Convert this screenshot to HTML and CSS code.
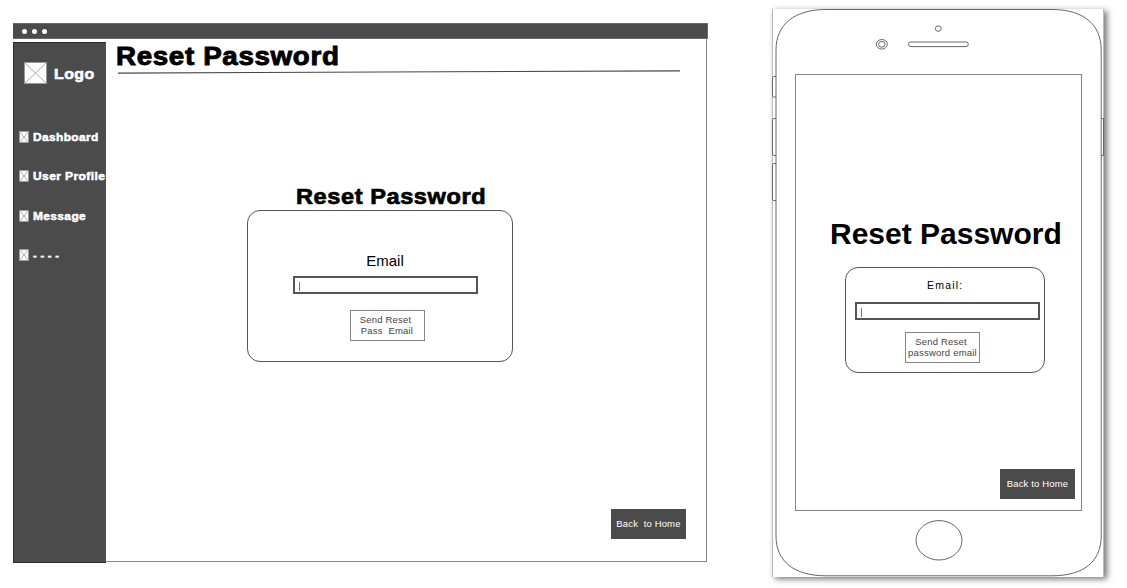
FILE: index.html
```html
<!DOCTYPE html>
<html lang="en">
<head>
<meta charset="utf-8">
<title>Reset Password</title>
<link rel="stylesheet" href="styles.css">
</head>
<body>
<svg class="defs" width="0" height="0" aria-hidden="true">
  <symbol id="placeholder" viewBox="0 0 24 24" preserveAspectRatio="none">
    <rect x="0" y="0" width="24" height="24" fill="#fff"/>
    <path d="M0 0L24 24M24 0L0 24" stroke="#aaa" stroke-width="1" vector-effect="non-scaling-stroke"/>
    <rect x="0" y="0" width="24" height="24" fill="none" stroke="#999" stroke-width="2" vector-effect="non-scaling-stroke"/>
  </symbol>
</svg>
<main class="board">
  <section class="browser">
    <header class="titlebar"><i class="dot"></i><i class="dot"></i><i class="dot"></i></header>
    <div class="window">
      <nav class="sidebar">
        <div class="brand"><svg class="brand-icon"><use href="#placeholder"/></svg><span class="brand-name">Logo</span></div>
        <div class="nav-item"><svg class="nav-icon"><use href="#placeholder"/></svg><span class="nav-label">Dashboard</span></div>
        <div class="nav-item"><svg class="nav-icon"><use href="#placeholder"/></svg><span class="nav-label profile">User Profile</span></div>
        <div class="nav-item"><svg class="nav-icon"><use href="#placeholder"/></svg><span class="nav-label">Message</span></div>
        <div class="nav-item"><svg class="nav-icon"><use href="#placeholder"/></svg><span class="nav-label more">- - - -</span></div>
      </nav>
      <div class="page">
        <h1 class="page-title">Reset Password</h1>
        <svg class="rule" width="563" height="5" viewBox="0 0 563 5"><path d="M0 4.100L562 1.900" stroke="#484448" stroke-width="1.1"/></svg>
        <h2 class="form-title">Reset Password</h2>
        <form class="card">
          <label class="label">Email</label>
          <div class="field"><i class="caret"></i></div>
          <div class="button"><span class="line-one">Send Reset</span><span class="line-two">Pass&nbsp; Email</span></div>
        </form>
        <div class="home-button">Back&nbsp; to Home</div>
      </div>
    </div>
  </section>
  <section class="phone">
    <svg class="phone-art" width="332" height="568" viewBox="772 9 332 568" fill="none" stroke="#666" stroke-width="1">
      <path d="M776 50C776 24 795 9.5 826 9.5H1052C1083 9.5 1101.2 24 1101.2 50V536C1101.2 562 1083 575.8 1052 575.8H826C795 575.8 776 562 776 536Z"/>
      <path d="M776 76.5h-2.5q-1 0-1 1v18q0 1.500 1 1.500H776M776 118.500h-2.500q-1 0-1 1v34.500q0 1.500 1 1.500H776M776 163.500h-2.500q-1 0-1 1v34.500q0 1.500 1 1.500H776M1101 118.500h2.500v37H1101"/>
      <ellipse cx="881.800" cy="44.300" rx="5.500" ry="4.800"/>
      <ellipse cx="881.800" cy="44.300" rx="3.200" ry="2.900"/>
      <ellipse cx="938.300" cy="28.600" rx="3" ry="2.700"/>
      <rect x="908.500" y="42" width="59.800" height="4.600" rx="2.300"/>
      <ellipse cx="939" cy="540.300" rx="23" ry="19.700"/>
    </svg>
    <div class="screen">
      <h1 class="screen-title">Reset Password</h1>
      <form class="card small">
        <label class="label">Email:</label>
        <div class="field"><i class="caret"></i></div>
        <div class="button"><span class="line-one">Send Reset</span><span class="line-two">password email</span></div>
      </form>
      <div class="home-button">Back&nbsp;to Home</div>
    </div>
  </section>
</main>
</body>
</html>
```
FILE: styles.css
```css
* { box-sizing: border-box; }
body { margin: 0; background: #fff; color: #000; font-family: "Liberation Sans", Arial, sans-serif; overflow: hidden; }
h1, h2, form { margin: 0; }
.defs { position: absolute; }
.board { display: flex; align-items: flex-start; width: 1127px; height: 588px; padding: 9px 0 0 13px; }

.browser { width: 695px; margin-top: 14px; flex: none; }
.titlebar { display: flex; align-items: center; gap: 5px; height: 16px; padding: 1px 0 0 9px; background: #4b4b4b; border: solid #6b6b6b; border-width: 1px 1px 1px 0; }
.dot { width: 5px; height: 5px; border-radius: 50%; background: #fff; }
.window { display: flex; width: 694px; height: 523px; border: 1px solid #888; border-width: 0 1px 1px 0; }
.sidebar { width: 93px; height: 521px; margin-top: 3px; flex: none; background: #4b4b4b; border: 1px solid #2e2e2e; border-right-color: #555; color: #fff; font-weight: bold; }
.brand { display: flex; align-items: center; gap: 7px; height: 22px; margin: 19px 0 0 10px; }
.brand-icon { width: 23px; height: 22px; flex: none; }
.brand-name { font-size: 15px; line-height: 22px; padding-top: 1px; letter-spacing: .4px; transform: scaleX(1.06); transform-origin: left; -webkit-text-stroke: .6px #fff; }
.nav-item { display: flex; align-items: center; gap: 4px; height: 12px; margin: 27.300px 0 0 5px; }
.brand + .nav-item { margin-top: 47px; }
.nav-icon { width: 10px; height: 12px; flex: none; }
.nav-label { font-size: 11px; line-height: 12px; white-space: nowrap; letter-spacing: .35px; transform: scaleX(1.085); transform-origin: left; -webkit-text-stroke: .5px #fff; }
.profile { transform: scaleX(1.095); }
.more { transform: scaleX(1); }

.page { display: flex; flex-direction: column; width: 600px; }
.page-title { height: 30px; margin: 2px 0 0 10px; font-size: 26px; line-height: 30px; letter-spacing: .6px; transform: scaleX(1.068); transform-origin: left; -webkit-text-stroke: .9px #000; }
.rule { display: block; margin: -2px 0 0 12px; flex: none; }
.form-title { height: 26px; margin: 110px 0 0 190px; font-size: 22px; line-height: 26px; letter-spacing: .55px; transform: scaleX(1.07); transform-origin: left; -webkit-text-stroke: .7px #000; }
.card { display: flex; flex-direction: column; align-items: center; width: 266px; height: 152px; margin: 0 0 0 140.500px; padding: 41px 0 0 11px; border: 1px solid #555; border-radius: 13px; flex: none; }
.label { font-size: 15px; line-height: 18px; }
.field { width: 185px; height: 18px; margin-top: 6px; padding: 4px; border: 2px solid #555; flex: none; }
.caret { display: block; width: 1px; height: 9px; background: #777e35; }
.button { display: flex; flex-direction: column; align-items: center; width: 75px; height: 30.500px; margin: 16px 0 0 4px; padding-top: 3px; border: 1px solid #858585; color: #444; font-size: 9.500px; line-height: 11px; letter-spacing: .2px; white-space: pre; flex: none; }
.line-one { margin-right: 3px; }
.home-button { align-self: flex-end; width: 75px; height: 30px; margin: 147px 7px 0 0; background: #4b4b4b; color: #fff; font-size: 9.500px; line-height: 29px; letter-spacing: .15px; text-align: center; white-space: pre; flex: none; }
.page .home-button { margin-right: 20px; }

.phone { position: relative; width: 332px; height: 568px; margin-left: 64px; padding: 65px 0 0 22px; background: #fff; border: solid #bbb; border-width: 0 1px; box-shadow: 3px 2px 6px rgba(0, 0, 0, .55); flex: none; }
.phone-art { position: absolute; left: -1px; top: 0; }
.screen { position: relative; display: flex; flex-direction: column; width: 287px; height: 437px; border: 1px solid #858585; }
.screen-title { margin: 141px 0 0 34px; font-size: 30px; line-height: 36px; white-space: nowrap; }
.small { width: 200px; height: 106px; margin: 15px 0 0 49px; align-items: flex-start; padding: 9px 0 0 9px; }
.small .label { margin-left: 72px; font-size: 10.500px; line-height: 16px; letter-spacing: 1.200px; }
.small .field { margin-top: 9px; }
.small .button { margin: 12px 0 0 50px; }
.screen .home-button { margin: 96px 6px 0 0; }
```
